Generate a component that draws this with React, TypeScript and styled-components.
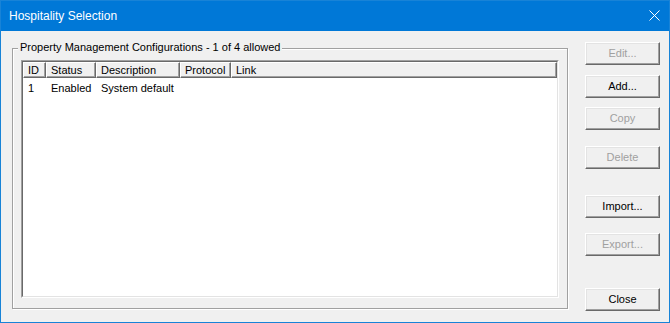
import styled, { createGlobalStyle } from 'styled-components';

const GlobalStyle = createGlobalStyle`
  html, body {
    margin: 0;
    padding: 0;
    background: #f0f0f0;
  }
  * {
    box-sizing: border-box;
  }
`;

const Window = styled.div`
  width: 670px;
  height: 323px;
  border: 1px solid #1883d7;
  background: #f0f0f0;
  display: flex;
  flex-direction: column;
  font-family: "Liberation Sans", Arial, sans-serif;
  font-size: 11px;
  color: #000;
`;

const TitleBar = styled.div`
  height: 30px;
  flex: none;
  display: flex;
  align-items: center;
  justify-content: space-between;
  padding: 0 9px 0 8px;
  background: #0078d7;
  color: #fff;
`;

const Title = styled.span`
  font-family: "Liberation Sans", Arial, sans-serif;
  font-size: 12px;
  line-height: 16px;
  margin-top: -1px;
`;

const CloseGlyph = styled.svg`
  display: block;
  margin-top: -1px;
`;

const Body = styled.div`
  flex: 1;
  display: flex;
  align-items: flex-start;
  padding: 11px 9px 0 11px;
`;

const GroupBox = styled.div`
  position: relative;
  width: 556px;
  height: 261px;
  margin-top: 6px;
  padding: 11px 8px 10px 8px;
  border: 1px solid #a0a0a0;
  box-shadow: inset 1px 1px 0 #fff, 1px 1px 0 #fff;
`;

const Caption = styled.span`
  position: absolute;
  top: -8px;
  left: 5px;
  padding: 0 2px;
  line-height: 13px;
  background: #f0f0f0;
  white-space: nowrap;
`;

const ListFrame = styled.div`
  width: 538px;
  height: 238px;
  border: 1px solid;
  border-color: #a0a0a0 #fff #fff #a0a0a0;
`;

const ListInner = styled.div`
  height: 100%;
  border: 1px solid;
  border-color: #696969 #e3e3e3 #e3e3e3 #696969;
  background: #fff;
  display: flex;
  flex-direction: column;
`;

const HeaderRow = styled.div`
  display: flex;
  height: 16px;
  flex: none;
`;

const HeaderCell = styled.div<{ $width?: number }>`
  ${({ $width }) => ($width ? `width: ${$width}px; flex: none;` : 'flex: 1;')}
  height: 16px;
  padding-left: 4px;
  line-height: 14px;
  background: #f0f0f0;
  border: 1px solid;
  border-color: #fff #696969 #696969 #fff;
  box-shadow: inset -1px -1px 0 #a0a0a0;
  white-space: nowrap;
  overflow: hidden;
`;

const DataRow = styled.div`
  display: flex;
  height: 16px;
  margin-top: 2px;
`;

const DataCell = styled.div<{ $width?: number }>`
  ${({ $width }) => ($width ? `width: ${$width}px; flex: none;` : 'flex: 1;')}
  padding-left: 5px;
  line-height: 16px;
  white-space: nowrap;
`;

const ButtonColumn = styled.div`
  display: flex;
  flex-direction: column;
  margin-left: 17px;
`;

const Button = styled.button<{ $gap: number }>`
  width: 75px;
  height: 23px;
  margin: ${({ $gap }) => $gap}px 0 0 0;
  padding: 0 0 1px 0;
  font-family: "Liberation Sans", Arial, sans-serif;
  font-size: 11px;
  color: #000;
  background: #f0f0f0;
  border: 1px solid;
  border-color: #fff #696969 #696969 #fff;
  box-shadow: inset -1px -1px 0 #a0a0a0, inset 1px 1px 0 #e3e3e3;
  border-radius: 0;

  &:disabled {
    color: #a0a0a0;
  }
`;

const columns = [
  { label: 'ID', width: 23 },
  { label: 'Status', width: 50 },
  { label: 'Description', width: 84 },
  { label: 'Protocol', width: 51 },
  { label: 'Link' },
];

const rows = [['1', 'Enabled', 'System default', '', '']];

const buttons = [
  { label: 'Edit...', gap: 0, disabled: true },
  { label: 'Add...', gap: 10 },
  { label: 'Copy', gap: 9, disabled: true },
  { label: 'Delete', gap: 16, disabled: true },
  { label: 'Import...', gap: 26 },
  { label: 'Export...', gap: 15, disabled: true },
  { label: 'Close', gap: 32 },
];

export default function App() {
  return (
    <>
      <GlobalStyle />
      <Window>
        <TitleBar>
          <Title>Hospitality Selection</Title>
          <CloseGlyph width="11" height="11" viewBox="0 0 11 11">
            <path d="M0.5 0.5 L10.5 10.5 M10.5 0.5 L0.5 10.5" stroke="#fff" strokeWidth="1" />
          </CloseGlyph>
        </TitleBar>
        <Body>
          <GroupBox>
            <Caption>Property Management Configurations - 1 of 4 allowed</Caption>
            <ListFrame>
              <ListInner>
                <HeaderRow>
                  {columns.map((c) => (
                    <HeaderCell key={c.label} $width={c.width}>{c.label}</HeaderCell>
                  ))}
                </HeaderRow>
                {rows.map((r) => (
                  <DataRow key={r[0]}>
                    {r.map((v, i) => (
                      <DataCell key={i} $width={columns[i].width}>{v}</DataCell>
                    ))}
                  </DataRow>
                ))}
              </ListInner>
            </ListFrame>
          </GroupBox>
          <ButtonColumn>
            {buttons.map((b) => (
              <Button key={b.label} $gap={b.gap} disabled={b.disabled}>{b.label}</Button>
            ))}
          </ButtonColumn>
        </Body>
      </Window>
    </>
  );
}
